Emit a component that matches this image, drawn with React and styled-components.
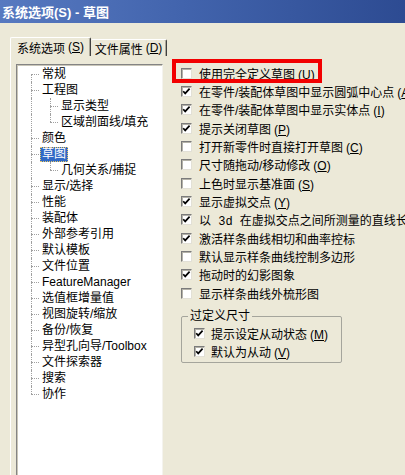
import React from "react";
import styled, { createGlobalStyle } from "styled-components";

const GlobalStyle = createGlobalStyle`
  html, body {
    margin: 0;
    padding: 0;
    background: #ece9d8;
  }
  body {
    font-family: "Liberation Sans", "Noto Sans CJK SC", sans-serif;
    font-size: 12px;
    color: #000;
  }
`;

const Window = styled.div`
  width: 405px;
  height: 475px;
  overflow: hidden;
  background: #ece9d8;
  display: flex;
  flex-direction: column;
`;

const TitleBar = styled.div`
  flex: none;
  height: 23px;
  display: flex;
  align-items: center;
  padding-left: 2px;
  background: linear-gradient(to right, #5779c0 0%, #4264ad 45%, #2d4b92 100%);
  color: #fff;
  font-weight: bold;
  font-size: 13px;
  white-space: nowrap;
`;

const Body = styled.div`
  flex: 1;
  min-height: 0;
  display: flex;
  flex-direction: column;
  padding: 14px 0 0 10px;
`;

const TabStrip = styled.div`
  flex: none;
  display: flex;
  align-items: flex-end;
  height: 19px;
`;

const Tab = styled.div`
  box-sizing: border-box;
  width: ${(p) => p.$width}px;
  height: ${(p) => (p.$active ? 19 : 17)}px;
  display: flex;
  align-items: center;
  justify-content: center;
  border: 1px solid;
  border-bottom: none;
  border-color: #fff #404040 transparent #fff;
  ${(p) => !p.$active && "border-left: none;"}
  border-radius: 2px 2px 0 0;
  box-shadow: inset -1px 0 0 #aca899;
  white-space: nowrap;
`;

const Panel = styled.div`
  flex: 1;
  min-height: 0;
  display: flex;
  align-items: flex-start;
  border-left: 1px solid #fff;
  padding: 8px 0 0 5px;
`;

const Tree = styled.div`
  flex: none;
  box-sizing: border-box;
  width: 147px;
  height: 420px;
  padding-top: 1px;
  background: #fff;
  border: 1px solid;
  border-color: #848484 #f4f3ee #f4f3ee #848484;
  box-shadow: inset 1px 1px 0 #c9c6b8;
`;

const TreeRow = styled.div`
  display: flex;
  height: 16px;
  align-items: center;
  white-space: nowrap;
`;

const Guide = styled.span`
  position: relative;
  flex: none;
  align-self: stretch;
  width: ${(p) => p.$w}px;
  &::before {
    content: "";
    position: absolute;
    left: ${(p) => p.$x}px;
    top: ${(p) => (p.$v === "bottom" ? "50%" : "0")};
    bottom: ${(p) => (p.$v === "top" ? "50%" : "0")};
    border-left: 1px dotted #a0a0a0;
  }
  &::after {
    content: "";
    position: absolute;
    left: ${(p) => p.$x}px;
    right: 1px;
    top: 50%;
    border-top: 1px dotted #a0a0a0;
    display: ${(p) => (p.$h ? "block" : "none")};
  }
`;

const TreeLabel = styled.span`
  box-sizing: border-box;
  height: 15px;
  line-height: 15px;
  padding: 0 2px;
  background: ${(p) => (p.$selected ? "#316ac5" : "transparent")};
  color: ${(p) => (p.$selected ? "#fff" : "#000")};
  outline: ${(p) => (p.$selected ? "1px dotted #e8c86a" : "none")};
  outline-offset: -1px;
`;

const Options = styled.div`
  flex: 1;
  min-width: 0;
  margin-left: 18px;
  display: flex;
  flex-direction: column;
`;

const OptionRow = styled.div`
  position: relative;
  height: 18.33px;
  display: flex;
  align-items: center;
  gap: ${(p) => p.$gap || 7}px;
  white-space: nowrap;
`;

const Highlight = styled.span`
  position: absolute;
  left: -9px;
  top: -5px;
  width: 150px;
  height: 24px;
  box-sizing: border-box;
  border: 4px solid #f20000;
  pointer-events: none;
`;

const Box = styled.span`
  flex: none;
  box-sizing: border-box;
  width: 11px;
  height: 11px;
  background: #fff;
  border: 1px solid;
  border-color: #7b7b7b #e2e0d6 #e2e0d6 #7b7b7b;
  box-shadow: inset 1px 1px 0 #b4b2a8;
  display: flex;
  align-items: center;
  justify-content: center;
`;

const Mono = styled.span`
  font-family: "Liberation Mono", monospace;
`;

const AccelWrap = styled.span`
  margin-left: 3px;
`;

const Group = styled.fieldset`
  box-sizing: border-box;
  width: 161px;
  margin: 6px 0 0 0;
  padding: 0 0 1px 12px;
  border: 1px solid #a5a59c;
  border-radius: 2px;
  min-width: 0;
`;

const Legend = styled.legend`
  padding: 0 2px;
  margin-left: -6px;
  line-height: 16px;
`;

function Accel({ k }) {
  return (
    <AccelWrap>
      (<u>{k}</u>)
    </AccelWrap>
  );
}

function Check({ checked }) {
  return (
    <Box>
      {checked && (
        <svg width="9" height="9" viewBox="0 0 9 9">
          <path
            d="M1.2 4.2 L3.2 6.4 L7.6 1.6"
            fill="none"
            stroke="#000"
            strokeWidth="1.7"
          />
        </svg>
      )}
    </Box>
  );
}

const treeItems = [
  { label: "常规", level: 1 },
  { label: "工程图", level: 1 },
  { label: "显示类型", level: 2 },
  { label: "区域剖面线/填充", level: 2, last: true },
  { label: "颜色", level: 1 },
  { label: "草图", level: 1, selected: true },
  { label: "几何关系/捕捉", level: 2, last: true },
  { label: "显示/选择", level: 1 },
  { label: "性能", level: 1 },
  { label: "装配体", level: 1 },
  { label: "外部参考引用", level: 1 },
  { label: "默认模板", level: 1 },
  { label: "文件位置", level: 1 },
  { label: "FeatureManager", level: 1 },
  { label: "选值框增量值", level: 1 },
  { label: "视图旋转/缩放", level: 1 },
  { label: "备份/恢复", level: 1 },
  { label: "异型孔向导/Toolbox", level: 1 },
  { label: "文件探索器", level: 1 },
  { label: "搜索", level: 1 },
  { label: "协作", level: 1 },
];

const options = [
  { text: "使用完全定义草图", key: "U", checked: false, marked: true },
  { text: "在零件/装配体草图中显示圆弧中心点", key: "A", checked: true },
  { text: "在零件/装配体草图中显示实体点", key: "I", checked: true },
  { text: "提示关闭草图", key: "P", checked: true },
  { text: "打开新零件时直接打开草图", key: "C", checked: false },
  { text: "尺寸随拖动/移动修改", key: "O", checked: false },
  { text: "上色时显示基准面", key: "S", checked: false },
  { text: "显示虚拟交点", key: "Y", checked: true },
  {
    text: (
      <>
        以<Mono> 3d </Mono>在虚拟交点之间所测量的直线长度
      </>
    ),
    checked: true,
  },
  { text: "激活样条曲线相切和曲率控标", checked: true },
  { text: "默认显示样条曲线控制多边形", checked: false },
  { text: "拖动时的幻影图象", checked: true },
  { text: "显示样条曲线外梳形图", checked: false },
];

const groupOptions = [
  { text: "提示设定从动状态", key: "M", checked: true },
  { text: "默认为从动", key: "V", checked: true },
];

export default function App() {
  const level1 = treeItems.filter((t) => t.level === 1);
  const first = level1[0];
  const last = level1[level1.length - 1];

  return (
    <>
      <GlobalStyle />
      <Window>
        <TitleBar>系统选项(S) - 草图</TitleBar>
        <Body>
          <TabStrip>
            <Tab $active $width={81}>
              系统选项<Accel k="S" />
            </Tab>
            <Tab $width={76}>
              文件属性<Accel k="D" />
            </Tab>
          </TabStrip>
          <Panel>
            <Tree>
              {treeItems.map((item) => (
                <TreeRow key={item.label}>
                  {item.level === 1 ? (
                    <Guide
                      $w={23}
                      $x={14}
                      $h
                      $v={item === first ? "bottom" : item === last ? "top" : "full"}
                    />
                  ) : (
                    <>
                      <Guide $w={23} $x={14} $v="full" />
                      <Guide $w={19} $x={10} $h $v={item.last ? "top" : "full"} />
                    </>
                  )}
                  <TreeLabel $selected={item.selected}>{item.label}</TreeLabel>
                </TreeRow>
              ))}
            </Tree>
            <Options>
              {options.map((o, i) => (
                <OptionRow key={i}>
                  {o.marked && <Highlight />}
                  <Check checked={o.checked} />
                  <span>
                    {o.text}
                    {o.key && <Accel k={o.key} />}
                  </span>
                </OptionRow>
              ))}
              <Group>
                <Legend>过定义尺寸</Legend>
                {groupOptions.map((o) => (
                  <OptionRow key={o.key} $gap={6}>
                    <Check checked={o.checked} />
                    <span>
                      {o.text}
                      <Accel k={o.key} />
                    </span>
                  </OptionRow>
                ))}
              </Group>
            </Options>
          </Panel>
        </Body>
      </Window>
    </>
  );
}
